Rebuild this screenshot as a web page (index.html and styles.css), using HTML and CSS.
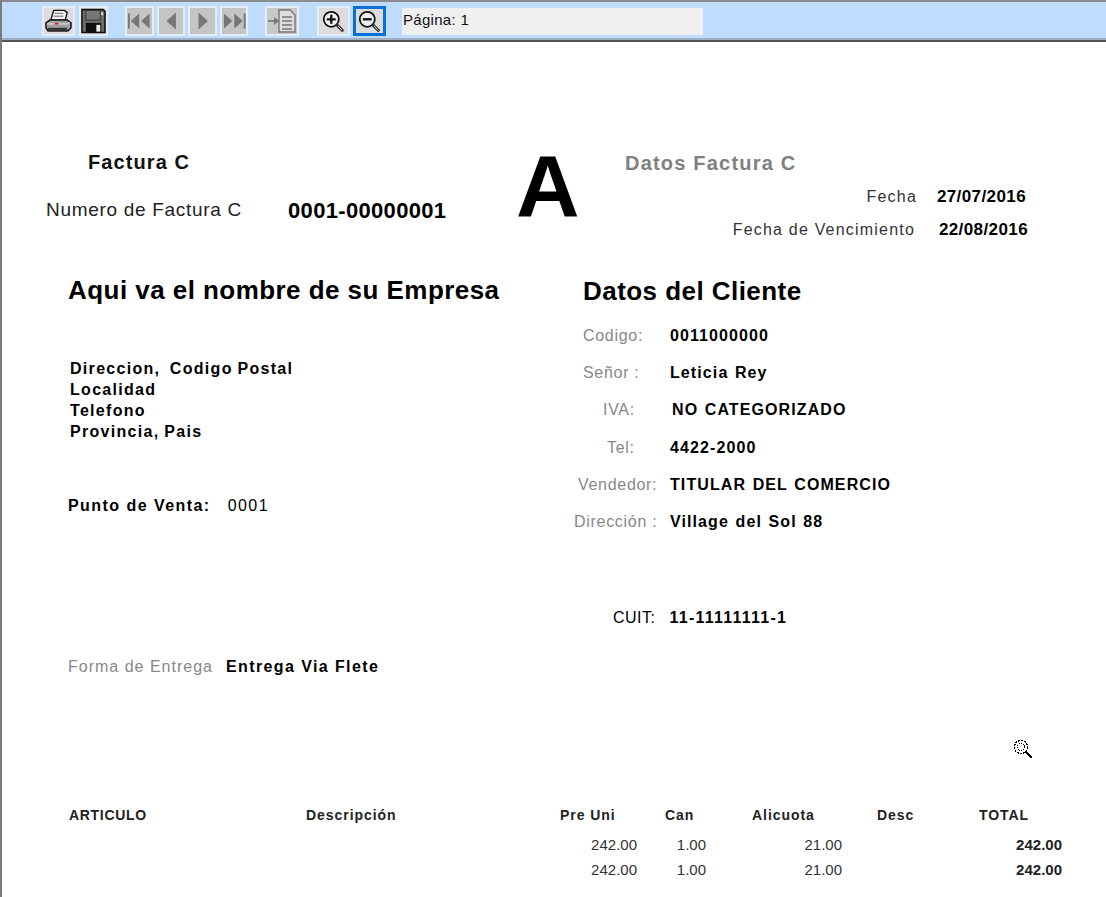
FILE: index.html
```html
<!DOCTYPE html>
<html lang="es">
<head>
<meta charset="utf-8">
<title>Factura C</title>
<link rel="stylesheet" href="styles.css">
</head>
<body>
<div class="window">
  <div class="toolbar">
    <div class="group print-group">
      <button class="btn wide"><svg viewBox="0 0 28 25" width="27" height="25"><path d="M9 1h11l3 2-2 8H6z" fill="#f2f2f2" stroke="#111" stroke-width="1.4"/><path d="M10 4h9M9 7h10" stroke="#666"/><path d="M5 11h18l4 3v5l-3 3H3l-2-3v-5z" fill="#a0a0a0" stroke="#111" stroke-width="1.5"/><path d="M2 15h21l3-2" stroke="#e6e6e6" fill="none"/><rect x="3" y="19" width="20" height="4" fill="#333"/><rect x="10" y="14" width="4" height="1.6" fill="#d22"/></svg></button>
      <button class="btn dark"><svg viewBox="0 0 26 26" width="26" height="26"><path d="M1 1h22l2 2v22H1z" fill="#6b6b6b" stroke="#111" stroke-width="1.6"/><rect x="5" y="2" width="15" height="10" fill="#777" stroke="#333"/><rect x="21" y="4" width="2" height="3" fill="#ddd"/><rect x="5" y="15" width="16" height="10" fill="#111"/><rect x="16" y="17" width="4" height="7" fill="#eee"/></svg></button>
    </div>
    <div class="group nav-group">
      <button class="btn off"><svg viewBox="0 0 26 18" width="26" height="18"><path d="M2 1v16" stroke="#777" stroke-width="2"/><path d="M13 1v16L4 9zM24 1v16L15 9z" fill="#777"/></svg></button>
      <button class="btn off"><svg viewBox="0 0 26 18" width="26" height="18"><path d="M18 0v18L8 9z" fill="#777"/></svg></button>
      <button class="btn off"><svg viewBox="0 0 26 18" width="26" height="18"><path d="M9 0v18L19 9z" fill="#777"/></svg></button>
      <button class="btn off"><svg viewBox="0 0 26 18" width="26" height="18"><path d="M24 1v16" stroke="#777" stroke-width="2"/><path d="M2 1v16L11 9zM13 1v16L22 9z" fill="#777"/></svg></button>
    </div>
    <div class="group export-group">
      <button class="btn off wide"><svg viewBox="0 0 30 24" width="30" height="24"><path d="M12 1h11l5 5v17H12z" fill="#ddd" stroke="#777" stroke-width="1.4"/><path d="M15 8h10M15 12h10M15 16h10M15 20h10" stroke="#777" stroke-width="1.4"/><path d="M1 12h8" stroke="#777" stroke-width="1.6"/><path d="M7 8v8l5-4z" fill="#777"/></svg></button>
    </div>
    <div class="group zoom-group">
      <button class="btn wide"><svg viewBox="0 0 26 26" width="23" height="23"><circle cx="10.5" cy="10.5" r="8.5" fill="#eee" stroke="#111" stroke-width="2"/><path d="M5.5 10.5h10M10.5 5.5v10" stroke="#111" stroke-width="2.6"/><path d="M16.5 16.5l7.5 7.5" stroke="#333" stroke-width="3.4"/><path d="M18 18l5 5" stroke="#ddd" stroke-width="1"/></svg></button>
      <button class="btn wide active"><svg viewBox="0 0 26 26" width="23" height="23"><circle cx="10.5" cy="10.5" r="8.5" fill="#eee" stroke="#111" stroke-width="2"/><path d="M5.5 10.5h10" stroke="#111" stroke-width="2.6"/><path d="M16.5 16.5l7.5 7.5" stroke="#333" stroke-width="3.4"/><path d="M18 18l5 5" stroke="#ddd" stroke-width="1"/></svg></button>
    </div>
    <div class="page-label">Página: 1</div>
  </div>

  <main class="report">
    <section class="head">
      <div class="head-left">
        <div class="doc-title">Factura C</div>
        <div class="doc-number">
          <span class="num-label">Numero de Factura C</span>
          <span class="num-value">0001-00000001</span>
        </div>
      </div>
      <div class="letter">A</div>
      <div class="head-right">
        <div class="data-title">Datos Factura C</div>
        <div class="date-row first"><span class="date-label">Fecha</span><span class="date-value">27/07/2016</span></div>
        <div class="date-row"><span class="date-label">Fecha de Vencimiento</span><span class="date-value due">22/08/2016</span></div>
      </div>
    </section>

    <section class="body">
      <div class="company">
        <h1 class="company-name">Aqui va el nombre de su Empresa</h1>
        <div class="address">
          <div>Direccion,&nbsp; Codigo Postal</div>
          <div>Localidad</div>
          <div>Telefono</div>
          <div>Provincia, Pais</div>
        </div>
        <div class="pos"><b>Punto de Venta:</b><span>0001</span></div>
        <div class="delivery"><span class="delivery-label">Forma de Entrega</span><b>Entrega Via Flete</b></div>
      </div>
      <div class="client">
        <h2 class="client-title">Datos del Cliente</h2>
        <div class="client-grid">
          <span class="c-label l-codigo">Codigo:</span><b>0011000000</b>
          <span class="c-label l-senor">Señor :</span><b>Leticia Rey</b>
          <span class="c-label l-iva">IVA:</span><b class="shift">NO CATEGORIZADO</b>
          <span class="c-label l-tel">Tel:</span><b>4422-2000</b>
          <span class="c-label l-vend">Vendedor:</span><b>TITULAR DEL COMERCIO</b>
          <span class="c-label l-dir">Dirección :</span><b>Village del Sol 88</b>
        </div>
        <div class="cuit"><span>CUIT:</span><b>11-11111111-1</b></div>
      </div>
    </section>

    <section class="items">
      <div class="row titles">
        <span class="t-art">ARTICULO</span><span>Descripción</span><span>Pre Uni</span><span class="t-can">Can</span><span class="t-ali">Alicuota</span><span class="t-desc">Desc</span><span class="t-total">TOTAL</span>
      </div>
      <div class="row line">
        <span></span><span></span><span class="r">242.00</span><span class="r">1.00</span><span class="r">21.00</span><span></span><b class="r">242.00</b>
      </div>
      <div class="row line">
        <span></span><span></span><span class="r">242.00</span><span class="r">1.00</span><span class="r">21.00</span><span></span><b class="r">242.00</b>
      </div>
    </section>

    <svg class="cursor" viewBox="0 0 20 20" width="20" height="20" shape-rendering="crispEdges"><circle cx="8" cy="8" r="6.5" fill="#fff" stroke="#000" stroke-width="1.4" stroke-dasharray="2 1"/><circle cx="8" cy="8" r="3.5" fill="none" stroke="#000" stroke-dasharray="1 1"/><path d="M13 13l6 6" stroke="#000" stroke-width="2.6"/></svg>
  </main>
</div>
</body>
</html>
```
FILE: styles.css
```css
* { box-sizing: border-box; }
html, body { margin: 0; height: 100%; }
body { font-family: "Liberation Sans", Arial, sans-serif; background: #fff; color: #000; overflow: hidden; }
.window { width: 1106px; height: 897px; display: flex; flex-direction: column; border-left: 2px solid #7a7a7a; overflow: hidden; }

.toolbar { height: 42px; flex: none; display: flex; align-items: center; background: #bfdcff; border-top: 2px solid #8b8b8b; border-bottom: 2px solid #555; box-shadow: inset 0 -2px 0 #9fb0c4; padding-left: 40px; }
.group { display: flex; gap: 3px; }
.print-group { gap: 4px; }
.nav-group { margin-left: 17px; }
.export-group { margin-left: 17px; }
.zoom-group { margin-left: 18px; }
.btn { width: 29px; height: 30px; padding: 0; border: 2px solid #e4eef9; background: #c6c6c6; display: flex; align-items: center; justify-content: center; }
.btn.wide { width: 33px; background: #dcdcdc; }
.btn.dark { background: #d8d8d8; }
.btn.off { width: 28.5px; background: #c4c4c4; }
.btn.off.wide { width: 34px; background: #c8c8c8; }
.btn.active { border: 3px solid #0a6fd8; background: #dcdcdc; }
.page-label { margin-left: 16px; width: 301px; height: 27px; background: #efefef; font-size: 15px; letter-spacing: .3px; line-height: 24px; padding-left: 1px; color: #111; }

.report { position: relative; flex: 1; padding-top: 108px; }

.head { display: flex; height: 125px; }
.head-left { width: 469px; padding-left: 44px; }
.doc-title { margin-left: 42px; font-size: 20px; font-weight: bold; line-height: 24px; letter-spacing: 1.1px; color: #111; }
.doc-number { display: flex; align-items: center; margin-top: 18px; }
.num-label { width: 242px; padding-top: 0; margin-bottom: -3px; font-size: 19px; letter-spacing: .7px; color: #222; }
.num-value { padding-top: 6px; font-size: 22px; font-weight: bold; letter-spacing: .33px; }
.letter { width: 106px; margin-left: 45px; font-size: 88px; font-weight: bold; line-height: 71px; color: #000; }
.head-right { flex: 1; padding-left: 3px; }
.data-title { font-size: 20px; font-weight: bold; color: #808080; line-height: 26px; letter-spacing: 1.2px; }
.date-row { display: flex; justify-content: flex-end; align-items: baseline; padding-right: 78px; height: 33px; font-size: 16px; }
.date-row.first { margin-top: 11px; padding-right: 80px; }
.date-label { color: #333; letter-spacing: 1.2px; }
.date-value { width: 109px; font-size: 17px; font-weight: bold; letter-spacing: .4px; text-align: right; }
.date-value.due { width: 113px; }

.body { display: flex; }
.company { width: 513px; padding-left: 66px; }
.company-name, .client-title { margin: 0; font-size: 26px; font-weight: bold; line-height: 30px; letter-spacing: .45px; }
.address { margin-top: 53px; padding-left: 2px; font-size: 16px; font-weight: bold; line-height: 21px; letter-spacing: 1.3px; word-spacing: -1px; }
.pos { margin-top: 54px; font-size: 16px; letter-spacing: 1.45px; display: flex; gap: 17px; line-height: 20px; }
.delivery { margin-top: 141px; display: flex; gap: 13px; font-size: 16px; line-height: 20px; }
.delivery-label { color: #888; letter-spacing: 1px; }
.delivery b { letter-spacing: 1.4px; }

.client { padding-left: 59px; flex: 1; }
.client-title { margin-top: 1px; margin-left: 9px; }
.client-grid { margin-top: 11px; display: grid; grid-template-columns: 96px 1fr; grid-auto-rows: 37.3px; align-items: center; font-size: 16px; letter-spacing: 1.1px; word-spacing: 1px; }
.c-label { color: #888; letter-spacing: .7px; word-spacing: 0; }
.l-codigo, .l-senor { padding-left: 9px; }
.l-iva { padding-left: 29px; }
.l-tel { padding-left: 33px; }
.l-vend { padding-left: 4px; }
.shift { margin-left: 2px; }
.cuit { margin-top: 67px; padding-left: 39px; display: flex; gap: 14px; font-size: 16px; line-height: 20px; }
.cuit span { letter-spacing: .5px; }
.cuit b { letter-spacing: 1.25px; }

.items { margin-top: 129px; padding-left: 67px; }
.row { display: grid; grid-template-columns: 237px 254px 77px 69px 136px 118px 102px; }
.titles { font-size: 14px; font-weight: bold; letter-spacing: .95px; line-height: 18px; color: #222; margin-bottom: 8px; }
.t-art { letter-spacing: .7px; }
.t-can { padding-left: 28px; }
.t-ali { padding-left: 46px; }
.t-desc { padding-left: 35px; }
.t-total { padding-left: 19px; }
.line { font-size: 15px; line-height: 25px; color: #333; }
.line b { color: #222; }
.r { text-align: right; }

.cursor { position: absolute; left: 1011px; top: 697px; }
```
